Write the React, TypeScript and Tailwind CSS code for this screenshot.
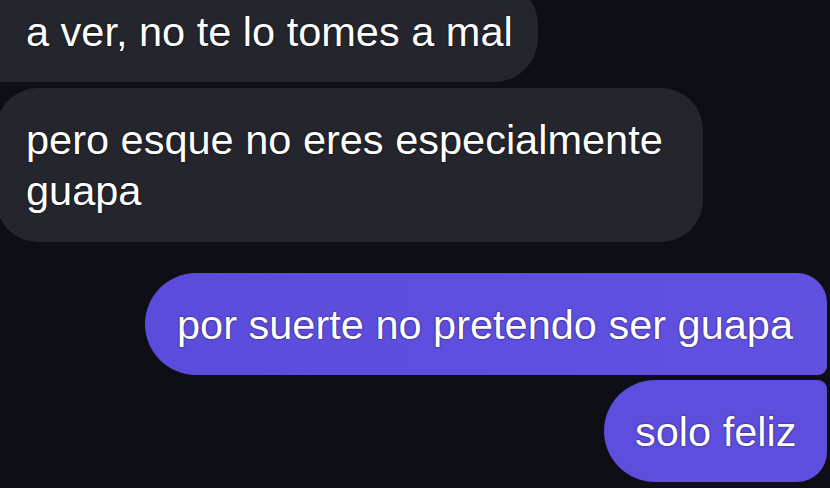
const App = () => {
  const font = { fontFamily: '"Liberation Sans", Arial, sans-serif' };

  return (
    <div
      className="w-[830px] h-[488px] overflow-hidden bg-[#0e0f16] flex flex-col text-white text-[41.5px] leading-[51px]"
      style={font}
    >
      {/* incoming */}
      <div className="flex flex-col gap-[6px] mt-[-19px]">
        <div className="ml-[-48px] w-[586px] pl-[74px] py-[25px] rounded-[44px] bg-[#25262d] [text-shadow:0_0_2px_rgba(0,0,0,0.9)]">
          a ver, no te lo tomes a mal
        </div>
        <div className="ml-[-4px] w-[707px] pl-[30px] py-[26px] rounded-[42px] bg-[#25262d] [text-shadow:0_0_2px_rgba(0,0,0,0.9)]">
          pero esque no eres especialmente
          <br />
          guapa
        </div>
      </div>

      {/* outgoing */}
      <div className="flex flex-col items-end gap-[5px] mt-[31px] mr-[3px]">
        <div className="w-[682px] pl-[32px] py-[25.5px] whitespace-nowrap rounded-l-[51px] rounded-tr-[30px] rounded-br-[9px] bg-gradient-to-r from-[#5c4cdc] to-[#6151e0] [text-shadow:0_0_2px_rgba(20,10,60,0.9)]">
          por suerte no pretendo ser guapa
        </div>
        <div className="w-[223px] pl-[31px] py-[25.5px] whitespace-nowrap rounded-l-[51px] rounded-tr-[9px] rounded-br-[30px] bg-[#5d4ede] [text-shadow:0_0_2px_rgba(20,10,60,0.9)]">
          solo feliz
        </div>
      </div>
    </div>
  );
};

export default App;
